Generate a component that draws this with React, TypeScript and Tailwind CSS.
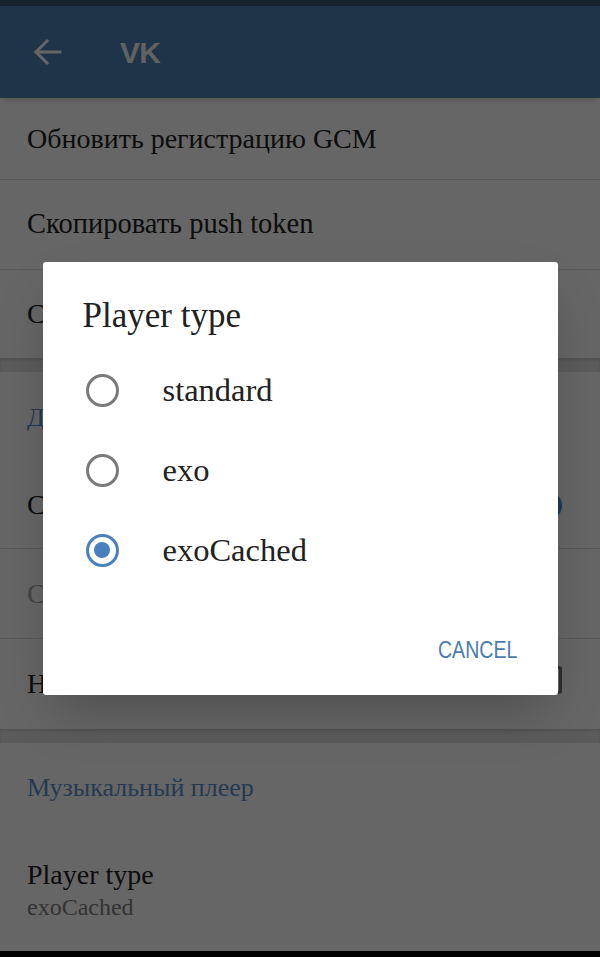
import React from 'react';

type Option = { label: string; value: string };

const options: Option[] = [
  { label: 'standard', value: 'standard' },
  { label: 'exo', value: 'exo' },
  { label: 'exoCached', value: 'exoCached' },
];

const Row: React.FC<{ h: string; children: React.ReactNode; className?: string }> = ({ h, children, className = '' }) => (
  <div className={`${h} flex items-center justify-between pl-[27px] pr-[38px] border-b border-[#dedede] ${className}`}>
    {children}
  </div>
);

const Radio: React.FC<{ checked: boolean }> = ({ checked }) => (
  <div
    className={`w-[33px] h-[33px] rounded-full border-[3px] flex items-center justify-center shrink-0 ${
      checked ? 'border-[#4a80bd]' : 'border-[#7a7a7a]'
    }`}
  >
    {checked && <div className="w-[16px] h-[16px] rounded-full bg-[#4a80bd]" />}
  </div>
);

export default function App() {
  const selected = 'exoCached';

  return (
    <div className="relative w-[600px] h-[957px] overflow-hidden bg-white font-['Liberation_Serif',serif] text-[#222]">
      {/* status bar */}
      <div className="h-[6px] bg-[#305573]" />

      {/* toolbar */}
      <header className="h-[92px] bg-[#4e82b6] flex items-center shadow-md relative z-10">
        <svg width="30" height="28" viewBox="0 0 30 28" className="ml-[32px]" fill="none" stroke="white" strokeWidth="3" strokeLinecap="square">
          <path d="M28 14H4" />
          <path d="M15 3 4 14l11 11" />
        </svg>
        <span className="ml-[58px] text-[#f2f4f7] text-[30px] font-bold font-['Liberation_Sans',sans-serif] tracking-tight">VK</span>
      </header>

      {/* settings list */}
      <div className="flex flex-col">
        <Row h="h-[82px]">
          <span className="text-[28px] whitespace-nowrap">Обновить регистрацию GCM</span>
        </Row>
        <Row h="h-[90px]">
          <span className="text-[28.5px] whitespace-nowrap">Скопировать push token</span>
        </Row>
        <div className="h-[88px] flex items-center pl-[27px]">
          <span className="text-[28px] whitespace-nowrap">Сброс</span>
        </div>

        <div className="h-[14px] bg-[#e4e4e4] shadow-[inset_0_2px_3px_rgba(0,0,0,0.12)]" />

        <div className="h-[90px] flex items-center pl-[27px]">
          <span className="text-[26px] text-[#5a92cc] whitespace-nowrap">Дополнительно</span>
        </div>
        <Row h="h-[87px]">
          <span className="text-[28px] whitespace-nowrap">Сжатие трафика</span>
          <div className="relative w-[52px] h-[30px] flex items-center">
            <div className="absolute left-[4px] right-[4px] h-[18px] rounded-full bg-[#a9c8ea]" />
            <div className="absolute right-0 w-[29px] h-[29px] rounded-full bg-[#4791d6] shadow" />
          </div>
        </Row>
        <Row h="h-[90px]">
          <span className="text-[28px] text-[#aaa] whitespace-nowrap">Сервер прокси</span>
        </Row>
        <div className="h-[90px] flex items-center justify-between pl-[27px] pr-[38px]">
          <span className="text-[28px] whitespace-nowrap">Не сжимать</span>
          <div className="w-[28px] h-[28px] mb-[8px] rounded-[3px] border-[3px] border-[#757575]" />
        </div>

        <div className="h-[14px] bg-[#e4e4e4] shadow-[inset_0_2px_3px_rgba(0,0,0,0.12)]" />

        <div className="h-[88px] flex items-center pl-[27px]">
          <span className="text-[26px] text-[#5a92cc] whitespace-nowrap">Музыкальный плеер</span>
        </div>
        <div className="h-[121px] pl-[27px] pt-[27px]">
          <div className="text-[28px] leading-[34px]">Player type</div>
          <div className="text-[24px] leading-[30px] text-[#808080]">exoCached</div>
        </div>
      </div>

      {/* nav bar edge */}
      <div className="absolute bottom-0 left-0 right-0 h-[6px] bg-black" />

      {/* scrim + dialog */}
      <div className="absolute inset-0 bg-black/60 flex items-center justify-center z-20">
        <div className="w-[515px] h-[433px] bg-white rounded-[3px] shadow-2xl flex flex-col">
          <div className="pt-[34px] pl-[40px]">
            <h2 className="text-[35px] leading-[40px] text-[#212121]">Player type</h2>
          </div>
          <div className="mt-[14px] flex flex-col">
            {options.map((o) => (
              <div key={o.value} className="h-[80px] flex items-center pl-[43px]">
                <Radio checked={o.value === selected} />
                <span className="ml-[44px] text-[32.5px] text-[#212121]">{o.label}</span>
              </div>
            ))}
          </div>
          <div className="flex-1" />
          <div className="h-[90px] flex items-center justify-end pr-[40px]">
            <span className="inline-block origin-right scale-x-[0.85] text-[23px] text-[#4a7bb0] font-['Liberation_Sans',sans-serif]">
              CANCEL
            </span>
          </div>
        </div>
      </div>
    </div>
  );
}
